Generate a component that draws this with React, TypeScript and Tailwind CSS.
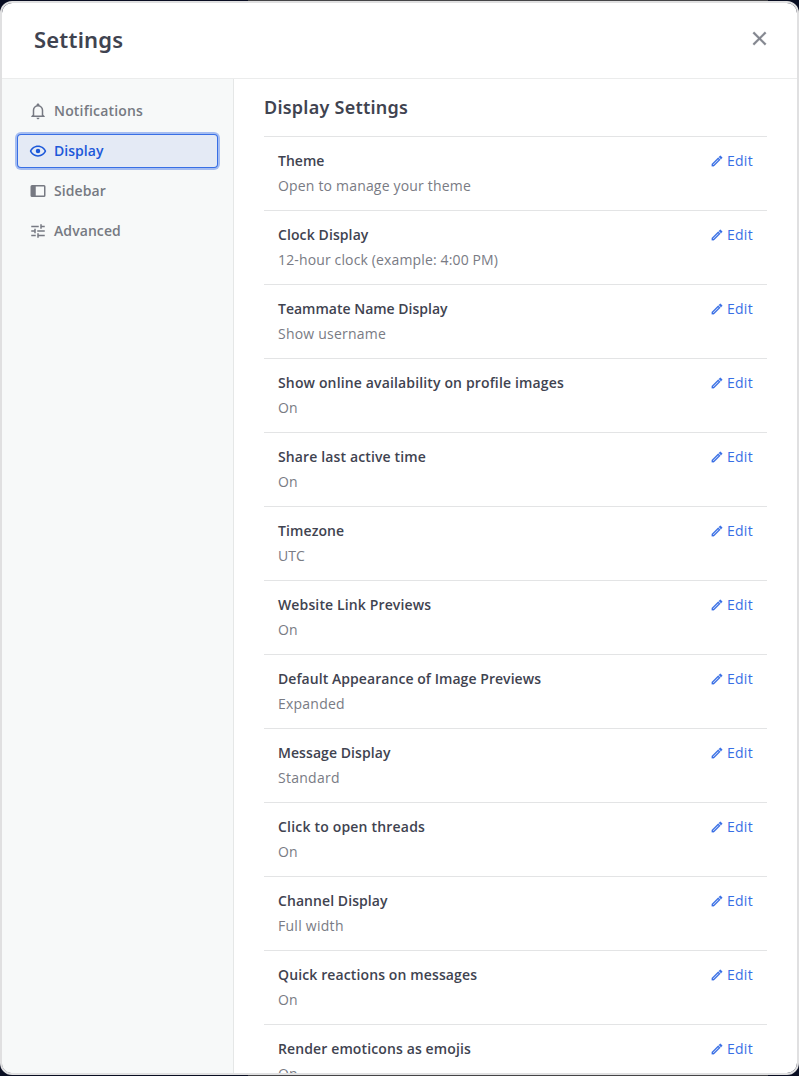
const icons = {
  bell: 'M10 21H14C14 22.1 13.1 23 12 23S10 22.1 10 21M21 19V20H3V19L5 17V11C5 7.9 7 5.2 10 4.3V4C10 2.9 10.9 2 12 2S14 2.9 14 4V4.3C17 5.2 19 7.9 19 11V17L21 19M17 11C17 8.2 14.8 6 12 6S7 8.2 7 11V18H17V11Z',
  eye: 'M12,9A3,3 0 0,1 15,12A3,3 0 0,1 12,15A3,3 0 0,1 9,12A3,3 0 0,1 12,9M12,4.5C17,4.5 21.27,7.61 23,12C21.27,16.39 17,19.5 12,19.5C7,19.5 2.73,16.39 1,12C2.73,7.61 7,4.5 12,4.5M3.18,12C4.83,15.36 8.24,17.5 12,17.5C15.76,17.5 19.17,15.36 20.82,12C19.17,8.64 15.76,6.5 12,6.5C8.24,6.5 4.83,8.64 3.18,12Z',
  dock: 'M20 4H4A2 2 0 0 0 2 6V18A2 2 0 0 0 4 20H20A2 2 0 0 0 22 18V6A2 2 0 0 0 20 4M20 18H9V6H20Z',
  tune: 'M3,17V19H9V17H3M3,5V7H13V5H3M13,21V19H21V17H13V15H11V21H13M7,9V11H3V13H7V15H9V9H7M21,13V11H11V13H21M15,9H17V7H21V5H17V3H15V9Z',
  pencil: 'M14.06,9L15,9.94L5.92,19H5V18.08L14.06,9M17.66,3C17.41,3 17.15,3.1 16.96,3.29L15.13,5.12L18.88,8.87L20.71,7.04C21.1,6.65 21.1,6 20.71,5.63L18.37,3.29C18.17,3.09 17.92,3 17.66,3M14.06,6.19L3,17.25V21H6.75L17.81,9.94L14.06,6.19Z',
  close: 'M19,6.41L17.59,5L12,10.59L6.41,5L5,6.41L10.59,12L5,17.59L6.41,19L12,13.41L17.59,19L19,17.59L13.41,12Z',
};

function Icon({ name, className }: { name: keyof typeof icons; className: string }) {
  return (
    <svg viewBox="0 0 24 24" fill="currentColor" className={className} aria-hidden="true">
      <path d={icons[name]} />
    </svg>
  );
}

const tabs: { icon: keyof typeof icons; label: string; tracking: string }[] = [
  { icon: 'bell', label: 'Notifications', tracking: 'tracking-[0.18px]' },
  { icon: 'eye', label: 'Display', tracking: 'tracking-[0.04px]' },
  { icon: 'dock', label: 'Sidebar', tracking: 'tracking-[0.1px]' },
  { icon: 'tune', label: 'Advanced', tracking: 'tracking-[0.08px]' },
];

const settings = [
  ['Theme', 'tracking-[0.02px]', 'Open to manage your theme', 'tracking-[0.18px]'],
  ['Clock Display', 'tracking-[0.1px]', '12-hour clock (example: 4:00 PM)', 'tracking-[0.14px]'],
  ['Teammate Name Display', 'tracking-normal', 'Show username', 'tracking-[0.22px]'],
  ['Show online availability on profile images', 'tracking-[0.145px]', 'On', 'tracking-[0.1px]'],
  ['Share last active time', 'tracking-[0.13px]', 'On', 'tracking-[0.1px]'],
  ['Timezone', 'tracking-[0.1px]', 'UTC', 'tracking-normal'],
  ['Website Link Previews', 'tracking-[0.13px]', 'On', 'tracking-[0.1px]'],
  ['Default Appearance of Image Previews', 'tracking-[0.06px]', 'Expanded', 'tracking-[0.22px]'],
  ['Message Display', 'tracking-[0.07px]', 'Standard', 'tracking-[0.27px]'],
  ['Click to open threads', 'tracking-[0.19px]', 'On', 'tracking-[0.1px]'],
  ['Channel Display', 'tracking-[0.07px]', 'Full width', 'tracking-[0.27px]'],
  ['Quick reactions on messages', 'tracking-[0.12px]', 'On', 'tracking-[0.1px]'],
  ['Render emoticons as emojis', 'tracking-[0.12px]', 'On', 'tracking-[0.1px]'],
];

export default function App() {
  return (
    <div className="h-[1076px] w-[799px] overflow-hidden bg-[linear-gradient(90deg,#090e22_248px,#444447_248px,#444447_768px,#090e22_768px)] py-px font-['Open_Sans',sans-serif] text-sm text-[#3f4350]">
      <div className="flex h-[1074px] flex-col overflow-hidden rounded-xl border-2 border-[#e0e0e1] bg-white bg-clip-padding">
        <header className="flex h-[76px] shrink-0 items-center justify-between border-b border-[#ebecec] pr-[26px] pb-1 pl-8">
          <h1 className="font-['Noto_Sans',sans-serif] text-[22px] leading-7 font-semibold tracking-[0.2px]">Settings</h1>
          <button aria-label="Close" className="text-[#82858e]">
            <Icon name="close" className="size-[23px] stroke-current stroke-[0.4]" />
          </button>
        </header>
        <div className="flex min-h-0 flex-1">
          <nav className="flex w-[232px] shrink-0 flex-col gap-2 border-r border-[#e5e7e7] bg-[#f7f9f9] pt-4 pr-[15px] pl-4">
            {tabs.map(({ icon, label, tracking }) => (
              <button
                key={label}
                className={
                  label === 'Display'
                    ? 'mr-px flex h-8 items-center rounded-[3px] bg-[#e4eaf5] pl-[11px] font-semibold text-[#1c58d9] shadow-[0_0_0_1px_#386fe5,0_0_0_3px_#a5bdf1]'
                    : 'mr-px flex h-8 items-center rounded pl-[11px] font-semibold text-[#767982]'
                }
              >
                <Icon name={icon} className="mr-[7px] size-[18px]" />
                <span className={tracking}>{label}</span>
              </button>
            ))}
          </nav>
          <main className="min-w-0 flex-1 overflow-hidden px-[30px]">
            <h2 className="flex h-[57px] items-center pb-0.5 font-['Noto_Sans',sans-serif] text-lg font-semibold tracking-[0.24px]">
              Display Settings
            </h2>
            {settings.map(([title, titleTracking, value, valueTracking]) => (
              <section key={title} className="h-[74px] border-t border-[#e3e4e5] px-3.5 pt-3.5">
                <div className="flex h-5 items-center justify-between">
                  <h3 className="font-semibold">
                    <span className={titleTracking}>{title}</span>
                  </h3>
                  <button className="flex items-center gap-[3px] tracking-[0.3px] text-[#386fe5]">
                    <Icon name="pencil" className="size-3.5 stroke-current stroke-[0.4]" />
                    Edit
                  </button>
                </div>
                <p className="mt-[5px] leading-5 text-[#797b84]">
                  <span className={valueTracking}>{value}</span>
                </p>
              </section>
            ))}
          </main>
        </div>
      </div>
    </div>
  );
}
